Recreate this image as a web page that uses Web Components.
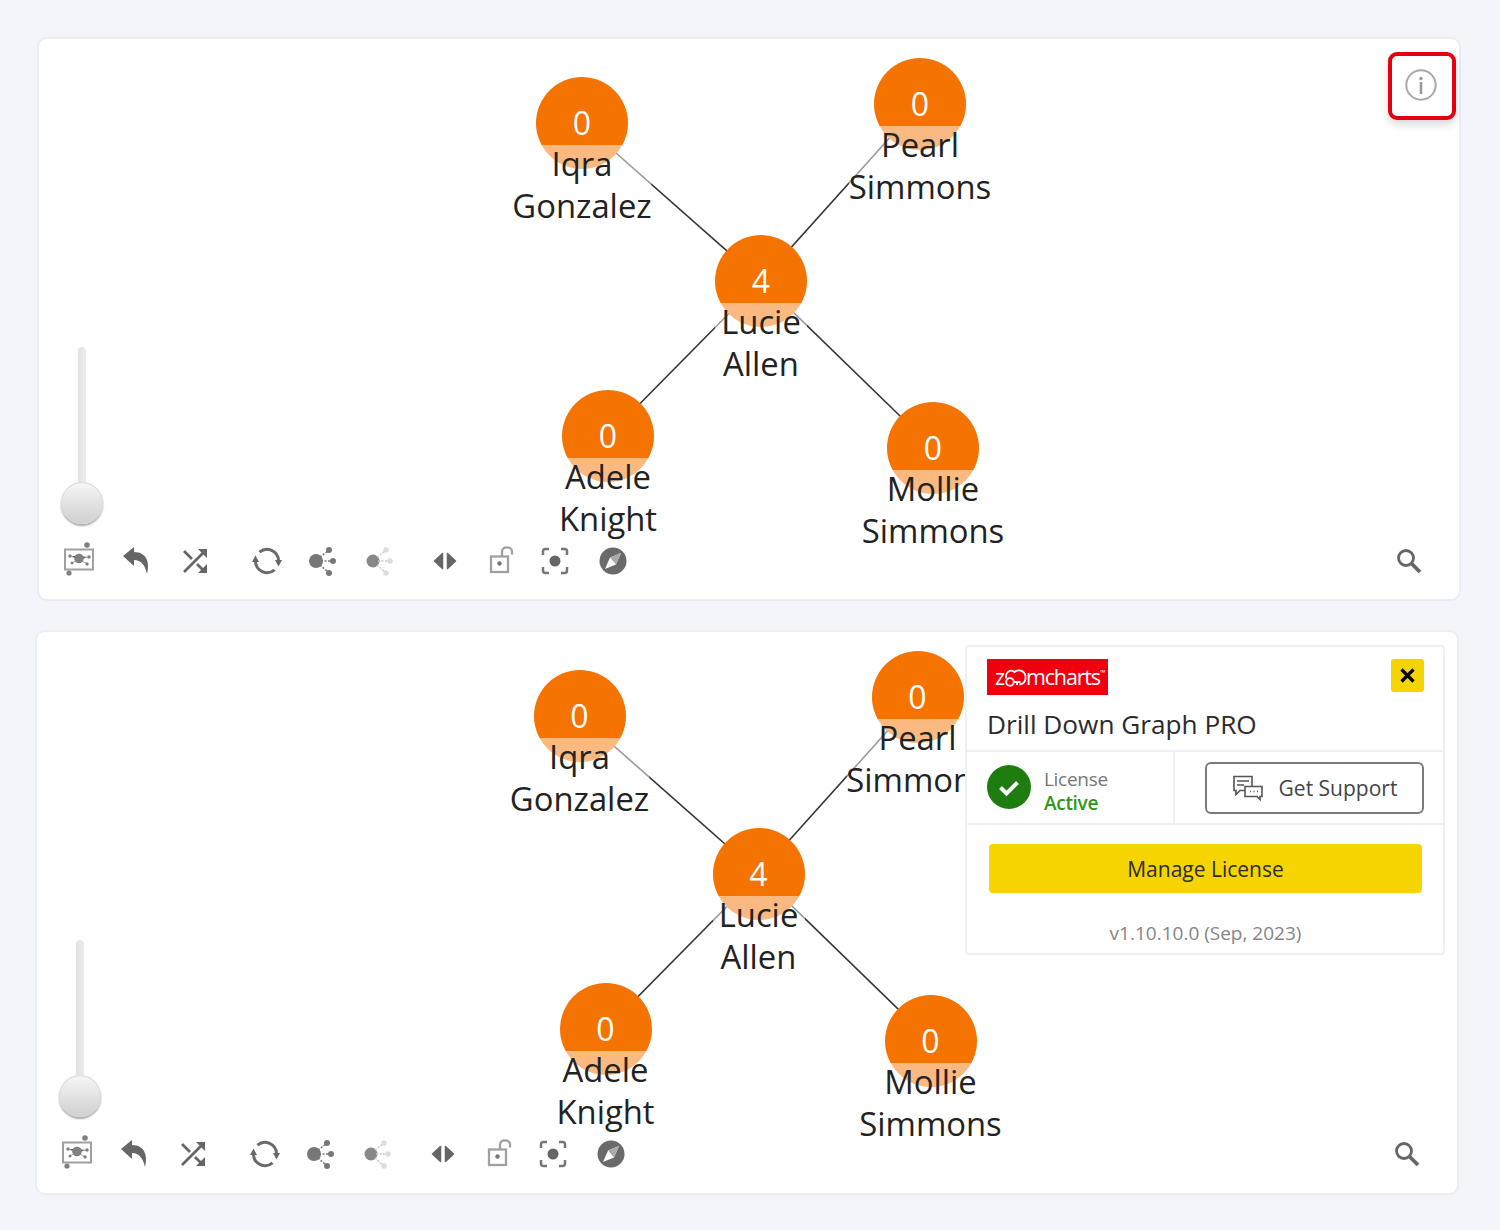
<!DOCTYPE html>
<html lang="en"><head><meta charset="utf-8"><title>Drill Down Graph PRO</title>
<style>
html,body{margin:0;background:#f3f5fa;height:1230px;overflow:hidden}
body{font-family:"Open Sans","Noto Sans",sans-serif;padding-top:37px;box-sizing:border-box}
graph-card{margin-left:37px}
graph-card+graph-card{margin-left:34.5px;margin-top:29px;height:565px}
</style></head><body>

<template id="t-card"><style>
:host{display:flex;flex-direction:column;width:1424px;height:564px;box-sizing:border-box;padding:1px;background:#fff;border:2px solid #e9edf4;border-radius:10px}
.stage{position:relative;flex:none;height:505px}
svg.edges{position:absolute;inset:0;width:100%;height:100%}
svg.edges line{stroke:#333;stroke-width:1.6}
</style>
<div class="stage"><svg class="edges" viewBox="0 0 1418 505"><line x1="721" y1="241" x2="542" y2="83"/><line x1="721" y1="241" x2="880" y2="64"/><line x1="721" y1="241" x2="568" y2="396"/><line x1="721" y1="241" x2="893" y2="408"/></svg>
<graph-node style="left:542px;top:83px" count="0">Iqra<br>Gonzalez</graph-node>
<graph-node style="left:880px;top:64px" count="0">Pearl<br>Simmons</graph-node>
<graph-node style="left:721px;top:241px" count="4">Lucie<br>Allen</graph-node>
<graph-node style="left:568px;top:396px" count="0">Adele<br>Knight</graph-node>
<graph-node style="left:893px;top:408px" count="0">Mollie<br>Simmons</graph-node>
<zoom-slider></zoom-slider>
<slot></slot></div>
<graph-toolbar></graph-toolbar></template>

<template id="t-node"><style>
:host{position:absolute;width:0;height:0;display:block;color:#222}
.c{position:absolute;left:-46px;top:-46px;width:92px;height:92px;border-radius:50%;background:#f57300;color:#fff;font-size:32px;line-height:92px;text-align:center}
.l{position:absolute;top:22px;left:0;transform:translateX(-50%);white-space:nowrap;text-align:center;font-size:32.8px;line-height:42px;background:rgba(255,255,255,.5);min-width:92px}
.l div{position:relative;top:-2px}
</style><div class="c"><span id="n"></span></div><div class="l"><div><slot></slot></div></div></template>

<template id="t-slider"><style>
:host{position:absolute;left:21px;top:307px;width:42px;height:177px;display:block}
.track{position:absolute;left:17px;top:0;width:8px;height:145px;background:linear-gradient(90deg,#e2e2e2,#ececec);border-radius:4px 4px 0 0}
.thumb{position:absolute;left:0;bottom:0;width:42px;height:42px;border-radius:50%;background:linear-gradient(#f7f7f7,#cfcfcf);box-shadow:0 2px 2px #aaa,inset 0 0 0 1px #d8d8d8}
</style><div class="track"></div><div class="thumb"></div></template>

<template id="t-toolbar"><style>
:host{display:grid;grid-template-columns:57px 59px 72px 55px 58px 65px 56px 54px 58px 1fr 32px;height:32px;padding:0 33px 21px 23px;align-items:center}
tool-icon[name=map]{margin-left:-1px}
</style>
<tool-icon name="map"></tool-icon><tool-icon name="back"></tool-icon><tool-icon name="shuffle"></tool-icon><tool-icon name="loop"></tool-icon><tool-icon name="expand"></tool-icon><tool-icon name="collapse"></tool-icon><tool-icon name="fit"></tool-icon><tool-icon name="lock"></tool-icon><tool-icon name="focus"></tool-icon><tool-icon name="compass"></tool-icon><tool-icon name="search"></tool-icon></template>

<template id="t-info"><style>
:host{position:absolute;right:2px;top:12px;width:68px;height:68px;box-sizing:border-box;border:4px solid #e3000f;border-radius:9px;background:#fff;box-shadow:0 5px 9px rgba(0,0,0,.14);display:flex;align-items:center;justify-content:center}
svg{position:relative;top:-1px;left:-1px}
</style><svg width="34" height="34" viewBox="0 0 34 34"><circle cx="17" cy="17" r="14.7" fill="none" stroke="#a9a9a9" stroke-width="2"/><circle cx="17" cy="10.500" r="1.700" fill="#999"/><rect x="15.700" y="14" width="2.600" height="12" fill="#999"/></svg></template>

<template id="t-panel"><style>
:host{position:absolute;left:927.5px;top:12px;width:480px;height:310px;box-sizing:border-box;background:#fff;border:2px solid #eef0f4;border-radius:4px;display:flex;flex-direction:column;color:#333;z-index:5}
.top{height:105px;box-sizing:border-box;padding:12px 19px 0 20px;border-bottom:2px solid #eef0f3;display:grid;grid-template-columns:1fr 33px;grid-template-rows:36px auto;row-gap:11px}
.logo{background:#f0000f;width:121px;height:36px;box-sizing:border-box;padding-left:8px;color:#fff;display:flex;align-items:center;justify-content:flex-start;font-size:21.500px;font-weight:400;letter-spacing:-1.150px;line-height:36px}
.logo svg{margin:2px -1px 0 -1px}
.x{width:33px;height:33px;background:#f5d400;border-radius:3px;display:flex;align-items:center;justify-content:center}
h1{grid-column:1/3;margin:0;font-size:26.200px;font-weight:500;line-height:36px;color:#2b2b2b;white-space:nowrap}
.mid{height:73px;display:grid;grid-template-columns:208px 1fr;border-bottom:2px solid #eef0f3;box-sizing:border-box}
.lic{border-right:2px solid #eef0f3;display:flex;align-items:center;gap:13px;padding-left:20px}
.lic svg{margin-top:-2px}
.lic .t{font-size:19px;line-height:24px;color:#777;letter-spacing:-.3px;margin-top:6px}
.lic b{display:block;color:#2f961c;font-weight:600}
.sup{display:flex;align-items:flex-start;padding:10px 19px 0 30px}
button{font:inherit;cursor:pointer}
.gs{width:100%;height:52px;background:#fff;border:2px solid #7b7b7b;border-radius:6px;display:flex;align-items:center;justify-content:center;gap:15px;font-size:21px;color:#444;padding:0}
.bot{flex:1;padding:19px 21px 0 22px;display:flex;flex-direction:column;align-items:center}
.ml{width:100%;height:49px;background:#f5d400;border:0;border-radius:4px;font-size:21px;color:#2c2c2c}
.v{margin-top:27px;font-size:19px;line-height:26px;color:#858585}
</style>
<div class="top"><div class="logo">z<svg width="24" height="22" viewBox="0 0 24 22"><g fill="none" stroke="#fff" stroke-width="1.800"><path d="M3.500 11.500C1.500 6 7 1.500 11.500 5c3-3 10-2 11 4 .5 5-2 8-6 8.500"/><circle cx="7" cy="15" r="3.800"/><path d="M10.500 15h7M14 15v3"/></g></svg>mcharts<span style="font-size:7px;align-self:flex-start;margin-top:-4px;letter-spacing:0">™</span></div>
<div class="x"><svg width="17" height="17" viewBox="0 0 17 17"><path d="M2.500 2.500l12 12M14.500 2.500l-12 12" stroke="#000" stroke-width="3.200"/></svg></div>
<h1>Drill Down Graph PRO</h1></div>
<div class="mid"><div class="lic"><svg width="44" height="44" viewBox="0 0 44 44"><circle cx="22" cy="22" r="22" fill="#1f7d10"/><path d="M13.500 22.500l6 6 11-11" fill="none" stroke="#fff" stroke-width="4"/></svg><div class="t">License<b>Active</b></div></div>
<div class="sup"><button class="gs"><svg width="32" height="26" viewBox="0 0 32 26" fill="none" stroke="#555" stroke-width="1.600"><path d="M2 1.500h18v14H8l-4 4v-4H2zM5 6h12M5 10h7"/><path d="M13 11.500h17v10h-2v3l-3-3H13z" fill="#fff"/><path d="M18 16.500h1M21.500 16.500h1M25 16.500h1"/></svg>Get Support</button></div></div>
<div class="bot"><button class="ml">Manage License</button><div class="v">v1.10.10.0 (Sep, 2023)</div></div></template>

<script>
const ICONS={
map:`<g stroke="#aaa" stroke-width="1"><path d="M8 11l9 3 10-2M17 14l8 5M17 14l-7 4"/></g><g fill="none" stroke="#a0a0a0" stroke-width="2"><rect x="3" y="4.500" width="28" height="20"/></g><g fill="#808080"><circle cx="25" cy="0" r="2.800"/><circle cx="7" cy="28" r="2.600"/><circle cx="17" cy="13.500" r="4.800"/><circle cx="8" cy="11" r="1.700"/><circle cx="27" cy="12" r="1.700"/><circle cx="25" cy="19" r="1.700"/><circle cx="10" cy="18" r="1.500"/></g>`,
back:`<path fill="#666" d="M14 2L3 11l11 10v-6c7 0 11 5 13 14 3-11 0-22-13-22z"/>`,
shuffle:`<g fill="none" stroke="#666" stroke-width="2.700"><path d="M5 27L26 6M5 6l8 8M18 19l8 8"/></g><path fill="#666" d="M28 4v9l-9-9zM28 28v-9l-9 9z"/>`,
loop:`<g fill="none" stroke="#6a6a6a" stroke-width="3"><path d="M8.500 7.200A11.500 11.500 0 0 1 27.500 15.500M23.500 24.800A11.500 11.500 0 0 1 4.500 16.500"/></g><path fill="#666" d="M24 15h7l-3.500 6.500zM1 17h7l-3.500-6.500z"/>`,
expand:`<circle cx="10" cy="16" r="7" fill="#777"/><g fill="#777"><circle cx="23" cy="5" r="3"/><circle cx="27" cy="16" r="3"/><circle cx="23" cy="28" r="3"/></g><g stroke="#777" stroke-width="1.600" stroke-dasharray="2 1.500"><path d="M14 12L22 6M15 16H25M14 20L22 27"/></g>`,
collapse:`<circle cx="9" cy="16" r="6.500" fill="#888"/><g fill="#ddd"><circle cx="22" cy="5" r="2.700"/><circle cx="26" cy="16" r="2.700"/><circle cx="22" cy="28" r="2.700"/></g><g stroke="#ccc" stroke-width="1.500" stroke-dasharray="2 1.500"><path d="M13 12L21 6M14 16H24M13 20L21 27"/></g>`,
fit:`<path fill="#666" stroke="#666" stroke-width="1.500" stroke-linejoin="round" d="M13.500 8.500v15L5.500 16zM18.500 8.500v15l8-7.500z"/>`,
lock:`<g fill="none" stroke="#a0a0a0" stroke-width="2.300"><rect x="6" y="11.500" width="17" height="15.500"/><path d="M17 11V6.500c0-5.500 10-5.500 10 0v3"/></g><circle cx="14.500" cy="18.500" r="2.200" fill="#777"/>`,
focus:`<circle cx="16" cy="16" r="5.500" fill="#666"/><g fill="none" stroke="#777" stroke-width="2.500"><path d="M4 10V6.500Q4 4 6.500 4H10M22 4H25.500Q28 4 28 6.500V10M28 22V25.500Q28 28 25.500 28H22M10 28H6.500Q4 28 4 25.500V22"/></g>`,
compass:`<circle cx="16" cy="16" r="13.500" fill="#6a6a6a"/><path fill="#fff" d="M24 8l-5 11.500L8 24l5-11.500z"/><path fill="#aaa" d="M24 8L13 12.500l6 7z"/>`,
search:`<circle cx="13" cy="13" r="7.500" fill="none" stroke="#666" stroke-width="2.800"/><path d="M18.500 18.500L27 27" stroke="#666" stroke-width="3.800"/>`
};
function def(tag,tpl,init){customElements.define(tag,class extends HTMLElement{constructor(){super();this.attachShadow({mode:"open"}).appendChild(document.getElementById(tpl).content.cloneNode(true))}connectedCallback(){init&&init(this)}})}
customElements.define("tool-icon",class extends HTMLElement{connectedCallback(){if(this.shadowRoot)return;const s=this.attachShadow({mode:"open"});s.innerHTML=`<style>:host{display:block;width:32px;height:32px}svg{display:block;overflow:visible}</style><svg width="32" height="32" viewBox="0 0 32 32">${ICONS[this.getAttribute("name")]}</svg>`}});
def("graph-node","t-node",e=>{e.shadowRoot.getElementById("n").textContent=e.getAttribute("count")});
def("zoom-slider","t-slider");def("graph-toolbar","t-toolbar");def("graph-card","t-card");def("info-button","t-info");def("license-panel","t-panel");
</script>
<graph-card><info-button></info-button></graph-card>
<graph-card><license-panel></license-panel></graph-card>
</body></html>
